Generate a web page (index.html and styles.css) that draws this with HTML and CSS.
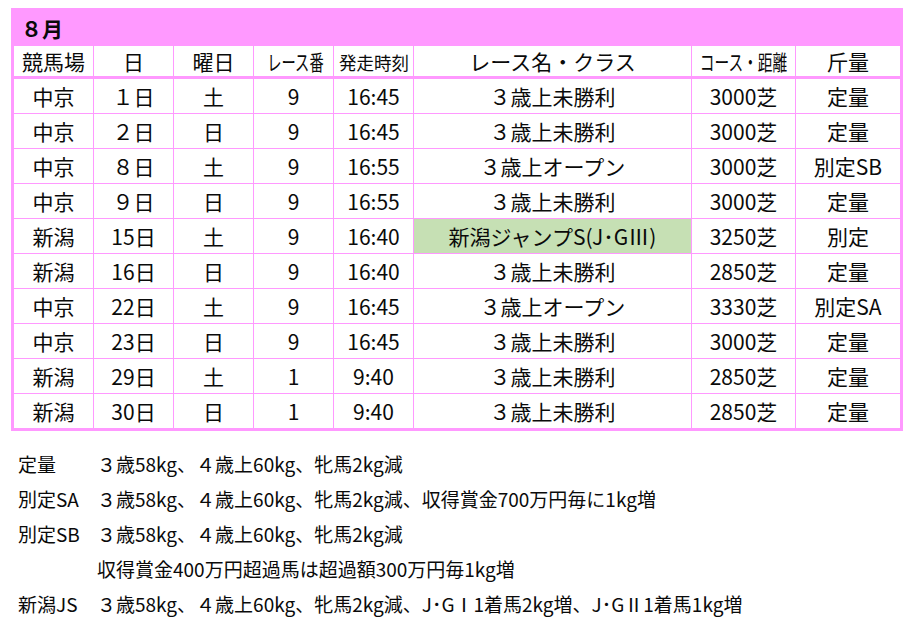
FILE: index.html
```html
<!DOCTYPE html>
<html lang="ja">
<head>
<meta charset="utf-8">
<title>8月</title>
<link rel="stylesheet" href="styles.css">
</head>
<body>
<table class="races">
  <colgroup>
    <col class="c-venue"><col class="c-day"><col class="c-dow"><col class="c-no"><col class="c-time"><col class="c-name"><col class="c-course"><col class="c-wt">
  </colgroup>
  <thead>
    <tr class="title-row"><th colspan="8" class="title">８月</th></tr>
    <tr class="head-row">
      <th>競馬場</th>
      <th>日</th>
      <th>曜日</th>
      <th><span class="narrow n1">レース番</span></th>
      <th><span class="narrow n2">発走時刻</span></th>
      <th>レース名・クラス</th>
      <th><span class="narrow n3">コース・距離</span></th>
      <th>斤量</th>
    </tr>
  </thead>
  <tbody>
    <tr><td>中京</td><td>１日</td><td>土</td><td>9</td><td>16:45</td><td>３歳上未勝利</td><td>3000芝</td><td>定量</td></tr>
    <tr><td>中京</td><td>２日</td><td>日</td><td>9</td><td>16:45</td><td>３歳上未勝利</td><td>3000芝</td><td>定量</td></tr>
    <tr><td>中京</td><td>８日</td><td>土</td><td>9</td><td>16:55</td><td>３歳上オープン</td><td>3000芝</td><td>別定SB</td></tr>
    <tr><td>中京</td><td>９日</td><td>日</td><td>9</td><td>16:55</td><td>３歳上未勝利</td><td>3000芝</td><td>定量</td></tr>
    <tr><td>新潟</td><td>15日</td><td>土</td><td>9</td><td>16:40</td><td class="grade">新潟ジャンプS(J･GⅢ)</td><td>3250芝</td><td>別定</td></tr>
    <tr><td>新潟</td><td>16日</td><td>日</td><td>9</td><td>16:40</td><td>３歳上未勝利</td><td>2850芝</td><td>定量</td></tr>
    <tr><td>中京</td><td>22日</td><td>土</td><td>9</td><td>16:45</td><td>３歳上オープン</td><td>3330芝</td><td>別定SA</td></tr>
    <tr><td>中京</td><td>23日</td><td>日</td><td>9</td><td>16:45</td><td>３歳上未勝利</td><td>3000芝</td><td>定量</td></tr>
    <tr><td>新潟</td><td>29日</td><td>土</td><td>1</td><td>9:40</td><td>３歳上未勝利</td><td>2850芝</td><td>定量</td></tr>
    <tr><td>新潟</td><td>30日</td><td>日</td><td>1</td><td>9:40</td><td>３歳上未勝利</td><td>2850芝</td><td>定量</td></tr>
  </tbody>
</table>

<div class="notes">
  <div class="label">定量</div><div class="text">３歳58kg、４歳上60kg、牝馬2kg減</div>
  <div class="label">別定SA</div><div class="text">３歳58kg、４歳上60kg、牝馬2kg減、収得賞金700万円毎に1kg増</div>
  <div class="label">別定SB</div><div class="text">３歳58kg、４歳上60kg、牝馬2kg減</div>
  <div class="label"></div><div class="text">収得賞金400万円超過馬は超過額300万円毎1kg増</div>
  <div class="label">新潟JS</div><div class="text">３歳58kg、４歳上60kg、牝馬2kg減、J･GⅠ1着馬2kg増、J･GⅡ1着馬1kg増</div>
</div>
</body>
</html>
```
FILE: styles.css
```css
html, body {
  margin: 0;
  padding: 0;
  background: #ffffff;
}
body {
  font-family: "Noto Sans CJK JP", "Noto Sans", sans-serif;
  color: #0a0a0a;
}
.races {
  margin: 8px 0 0 11px;
  width: 889px;
  border-collapse: collapse;
  table-layout: fixed;
  border: 3px solid #ff99ff;
}
.c-venue { width: 81px; }
.c-day { width: 80px; }
.c-dow { width: 80px; }
.c-no { width: 80px; }
.c-time { width: 80px; }
.c-name { width: 278px; }
.c-course { width: 104px; }
.c-wt { width: 106px; }

.races th, .races td {
  border: 1px solid #ff99ff;
  padding: 0;
  text-align: center;
  font-size: 21px;
  font-weight: normal;
  line-height: 24px;
  white-space: nowrap;
}
.title-row th.title {
  background: #ff99ff;
  text-align: left;
  height: 34px;
  padding-left: 7px;
  font-weight: bold;
  font-size: 21px;
  border: none;
}
.head-row th {
  height: 30px;
  border-bottom: 3px solid #ff99ff;
}
.races td {
  height: 34px;
}
.narrow {
  display: inline-block;
  transform-origin: center;
}
.n1 { transform: scaleX(0.68); }
.n2 { font-size: 18px; transform: scaleX(0.97); }
.n3 { transform: scaleX(0.7); margin: 0 -19px; }
.races td.grade {
  background: #c6e0b4;
}

.notes {
  margin: 15px 0 0 18px;
  display: grid;
  grid-template-columns: 79px auto;
  font-size: 19px;
  line-height: 35px;
}
.notes .label, .notes .text {
  white-space: nowrap;
}
```
